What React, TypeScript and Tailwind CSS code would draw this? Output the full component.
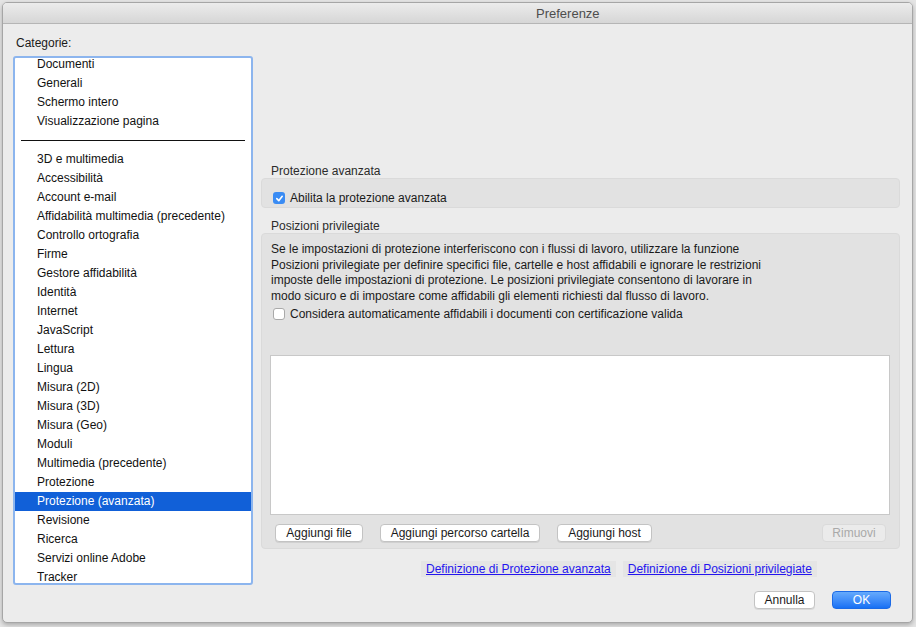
import React from 'react'

const font = { fontFamily: '"Liberation Sans", Arial, sans-serif' }

const topItems = ['Documenti', 'Generali', 'Schermo intero', 'Visualizzazione pagina']
const items = [
  '3D e multimedia',
  'Accessibilità',
  'Account e-mail',
  'Affidabilità multimedia (precedente)',
  'Controllo ortografia',
  'Firme',
  'Gestore affidabilità',
  'Identità',
  'Internet',
  'JavaScript',
  'Lettura',
  'Lingua',
  'Misura (2D)',
  'Misura (3D)',
  'Misura (Geo)',
  'Moduli',
  'Multimedia (precedente)',
  'Protezione',
  'Protezione (avanzata)',
  'Revisione',
  'Ricerca',
  'Servizi online Adobe',
  'Tracker',
]

function Row({ label, selected }: { label: string; selected?: boolean }) {
  return (
    <div
      className={
        'h-[19px] pl-[22px] text-[12px] leading-[19px] whitespace-nowrap ' +
        (selected ? 'bg-[#1160d8] text-white' : 'text-[#111]')
      }
    >
      {label}
    </div>
  )
}

function Checkbox({ checked }: { checked?: boolean }) {
  if (checked) {
    return (
      <div className="w-[12px] h-[12px] rounded-[3px] bg-[#3a8cf4] flex items-center justify-center shrink-0">
        <svg width="9" height="9" viewBox="0 0 10 10">
          <path d="M2 5.2 L4.2 7.4 L8 2.6" fill="none" stroke="white" strokeWidth="1.8" strokeLinecap="round" strokeLinejoin="round" />
        </svg>
      </div>
    )
  }
  return <div className="w-[12px] h-[12px] rounded-[3px] bg-white border border-[#a9a9a9] shrink-0" />
}

function Btn({ children, disabled, className }: { children: React.ReactNode; disabled?: boolean; className?: string }) {
  return (
    <div
      className={
        'h-[18px] rounded-[4px] border flex items-center justify-center text-[12px] leading-none ' +
        (disabled
          ? 'border-[#dadada] bg-[#ebebeb] text-[#a9a9a9] '
          : 'border-[#c3c3c3] bg-white text-[#1a1a1a] shadow-[0_1px_0_rgba(0,0,0,0.08)] ') +
        (className ?? '')
      }
    >
      {children}
    </div>
  )
}

export default function App() {
  return (
    <div className="w-[916px] h-[627px] bg-[#e4e4e4] pt-[2px] pl-[2px] pr-[3px] pb-[4px]" style={font}>
      <div className="h-full rounded-[5px] border border-[#a6a6a6] bg-[#ececec] flex flex-col overflow-hidden shadow-[0_2px_4px_rgba(0,0,0,0.25)]">
        {/* Title bar */}
        <div className="h-[21px] shrink-0 bg-gradient-to-b from-[#ececec] to-[#d6d6d6] border-b border-[#b5b5b5] pl-[533px] text-[13px] leading-[21px] text-[#4d4d4d]">
          Preferenze
        </div>

        <div className="flex flex-1 pt-[11px]">
          {/* Categories */}
          <div className="pl-[10px] w-[258px] shrink-0">
            <div className="pl-[3px] h-[16px] text-[12px] leading-[16px] text-[#1a1a1a]">Categorie:</div>
            <div className="mt-[5px] w-[240px] h-[529px] rounded-[3px] border-2 border-[#8cb5ee] bg-white overflow-hidden">
              <div className="-mt-[3px]">
                {topItems.map((t) => (
                  <Row key={t} label={t} />
                ))}
                <div className="h-[19px] flex items-center px-[6px]">
                  <div className="h-px w-full bg-[#111]" />
                </div>
                {items.map((t) => (
                  <Row key={t} label={t} selected={t === 'Protezione (avanzata)'} />
                ))}
              </div>
            </div>
          </div>

          {/* Right side */}
          <div className="w-[639px] shrink-0 pt-[129px] flex flex-col">
            <div className="pl-[10px] h-[14px] text-[12px] leading-[14px] text-[#2b2b2b]">Protezione avanzata</div>
            <div className="h-[30px] rounded-[4px] bg-[#e2e2e2] border border-[#dadada] pt-[13px] pl-[11px] flex items-start gap-[5px]">
              <Checkbox checked />
              <span className="text-[12px] leading-[12px] text-[#1a1a1a]">Abilita la protezione avanzata</span>
            </div>

            <div className="mt-[11px] pl-[10px] h-[14px] text-[12px] leading-[14px] text-[#2b2b2b]">Posizioni privilegiate</div>
            <div className="rounded-[4px] bg-[#e2e2e2] border border-[#dadada] pt-[8px] pb-[6px] flex flex-col">
              <p className="pl-[9px] whitespace-nowrap text-[12px] leading-[15.5px] text-[#1a1a1a]">
                Se le impostazioni di protezione interferiscono con i flussi di lavoro, utilizzare la funzione
                <br />
                Posizioni privilegiate per definire specifici file, cartelle e host affidabili e ignorare le restrizioni
                <br />
                imposte delle impostazioni di protezione. Le posizioni privilegiate consentono di lavorare in
                <br />
                modo sicuro e di impostare come affidabili gli elementi richiesti dal flusso di lavoro.
              </p>
              <div className="mt-[3px] h-[14px] pl-[11px] flex items-center gap-[5px]">
                <Checkbox />
                <span className="text-[12px] leading-[14px] text-[#1a1a1a]">
                  Considera automaticamente affidabili i documenti con certificazione valida
                </span>
              </div>
              <div className="mt-[34px] ml-[8px] mr-[9px] h-[160px] bg-white border border-[#c8c8c8]" />
              <div className="mt-[9px] pl-[13px] pr-[13px] flex items-center">
                <Btn className="w-[88px]">Aggiungi file</Btn>
                <Btn className="ml-[17px] w-[160px]">Aggiungi percorso cartella</Btn>
                <Btn className="ml-[17px] w-[95px]">Aggiungi host</Btn>
                <Btn disabled className="ml-auto w-[64px]">Rimuovi</Btn>
              </div>
            </div>

            <div className="mt-[12px] pl-[160px] flex gap-[7px]">
              <a className="h-[16px] px-[5px] bg-[#e5e5e5] text-[12px] leading-[16px] text-[#2415ee] underline">
                Definizione di Protezione avanzata
              </a>
              <a className="h-[16px] px-[5px] bg-[#e5e5e5] text-[12px] leading-[16px] text-[#2415ee] underline">
                Definizione di Posizioni privilegiate
              </a>
            </div>

            <div className="mt-[14px] pr-[9px] flex justify-end gap-[17px]">
              <Btn className="w-[61px]">Annulla</Btn>
              <div className="w-[59px] h-[18px] rounded-[4px] bg-gradient-to-b from-[#66aafc] to-[#1670f4] border border-[#1b6ae6] flex items-center justify-center text-[12px] text-white leading-none">
                OK
              </div>
            </div>
          </div>
        </div>
      </div>
    </div>
  )
}
